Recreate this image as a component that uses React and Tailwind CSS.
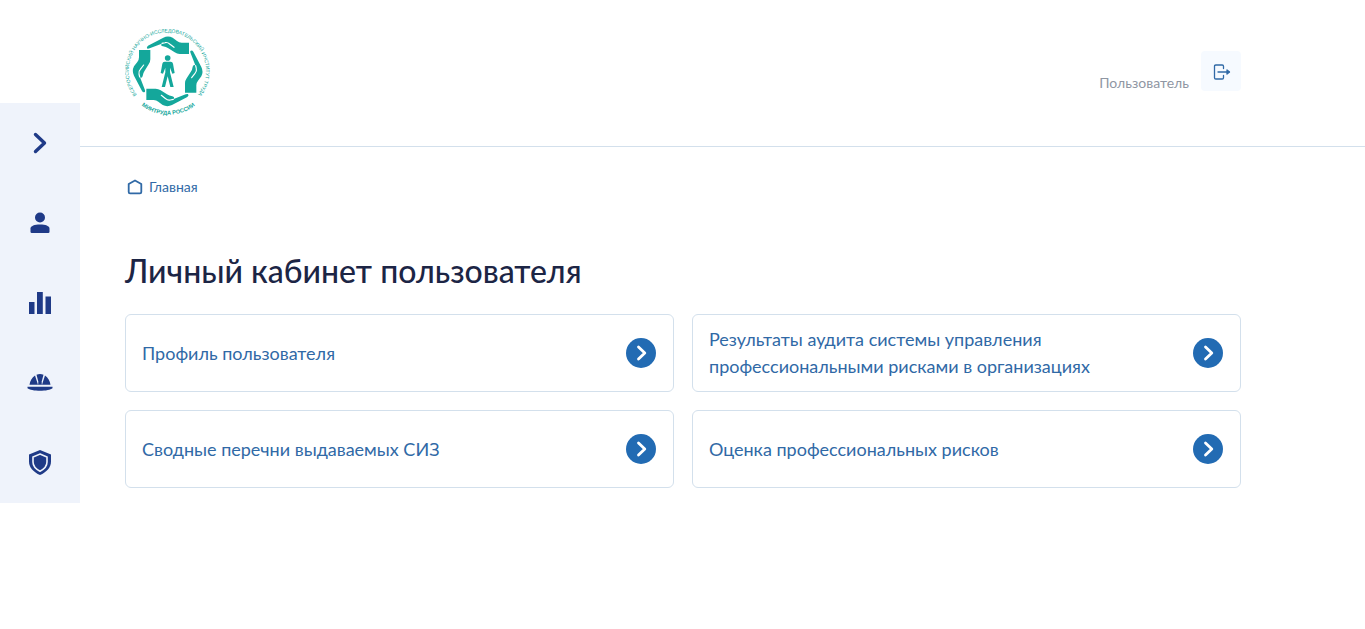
import React from 'react';

const menu = [
  { id: 'open', label: 'Развернуть меню', Icon: ChevronIcon },
  { id: 'profile', label: 'Профиль', Icon: UserIcon },
  { id: 'stats', label: 'Статистика', Icon: ChartIcon },
  { id: 'siz', label: 'СИЗ', Icon: HelmetIcon },
  { id: 'risks', label: 'Риски', Icon: ShieldIcon },
];

const cards = [
  { href: '#profile', title: 'Профиль пользователя' },
  { href: '#audit', title: 'Результаты аудита системы управления профессиональными рисками в организациях' },
  { href: '#siz', title: 'Сводные перечни выдаваемых СИЗ' },
  { href: '#risks', title: 'Оценка профессиональных рисков' },
];

function ChevronIcon() {
  return (
    <svg width="30" height="30" viewBox="0 0 30 30" fill="none" stroke="currentColor" strokeWidth="3.4" strokeLinecap="round" strokeLinejoin="round">
      <path d="M10.5 6.5 19.5 15l-9 8.5" />
    </svg>
  );
}

function UserIcon() {
  return (
    <svg width="30" height="30" viewBox="0 0 30 30" fill="currentColor">
      <circle cx="15" cy="9.5" r="5" />
      <path d="M5.5 20.5c0-2.5 4-4 9.5-4s9.5 1.5 9.5 4v3.300q0 1.200-1.200 1.200H6.700q-1.200 0-1.200-1.200z" />
    </svg>
  );
}

function ChartIcon() {
  return (
    <svg width="30" height="30" viewBox="0 0 30 30" fill="currentColor">
      <path d="M4 14h5.500v12H4zM12 4h5.800v22H12zM20.500 8.500H26V26h-5.500z" />
    </svg>
  );
}

function HelmetIcon() {
  return (
    <svg width="30" height="30" viewBox="0 0 30 30" fill="currentColor">
      <path d="M11.500 6.800Q15 5.200 18.500 6.800L16.300 15h-2.600zM10 7.600l3 9.200H4.500C5 13 7 9.500 10 7.600zM20 7.600l-3 9.200h8.500C25 13 23 9.500 20 7.600z" />
      <path d="M2.500 18.800h25v1.500C24 23.600 6 23.600 2.500 20.300z" />
      <path d="M13.600 14h2.800l.6 2.800h-4z" />
    </svg>
  );
}

function ShieldIcon() {
  return (
    <svg width="30" height="30" viewBox="0 0 30 30">
      <path d="M15 2 26 6.500v7c0 6-4.500 10.800-11 13.500C8.500 24.300 4 19.500 4 13.500v-7z" fill="currentColor" />
      <path d="M15 6 22 9v5c0 4-2.700 7-7 9.200-4.300-2.200-7-5.200-7-9.200V9z" fill="currentColor" stroke="#eff3fb" strokeWidth="1.600" />
    </svg>
  );
}

const hand = 'M97 86Q93 81 99 77L145 53Q159 46 173 53L186 63Q192 68 200 68H222V102H194Q186 102 179 97L160 85Q153 80 144 79 136 77 140 71L104 85Q100 87 97 86Z';
const angles = [0, 90, 180, 270];

function Logo() {
  return (
    <svg width="86" height="90" viewBox="30 21 258 270" fill="#14a79b" role="img" aria-label="ВНИИ труда">
      <defs>
        <path id="ring-top" d="M87 245.500A116 116 0 1 1 227 245.500" />
        <path id="ring-bottom" d="M70 248A130 130 0 0 0 250 248" />
      </defs>
      <text fontSize="15" fontFamily="Liberation Sans, sans-serif" textAnchor="middle">
        <textPath href="#ring-top" startOffset="50%">ВСЕРОССИЙСКИЙ НАУЧНО-ИССЛЕДОВАТЕЛЬСКИЙ ИНСТИТУТ ТРУДА</textPath>
      </text>
      <text fontSize="17" fontWeight="700" fontFamily="Liberation Sans, sans-serif" textAnchor="middle">
        <textPath href="#ring-bottom" startOffset="50%">МИНТРУДА РОССИИ</textPath>
      </text>
      {/* four hands around the figure */}
      {angles.map((angle) => (
        <g key={angle} transform={`rotate(${angle} 158 154)`}>
          <path d={hand} />
          <path d="M141 70 150 68Q158 66 164 72L177 82" fill="none" stroke="#fff" strokeWidth="3.500" strokeLinecap="round" />
        </g>
      ))}
      <circle cx="158" cy="114" r="8.500" />
      <path d="M149 125h18q6 0 7 6l5 28-7 2-7-18v14l11 44h-10l-8-32-8 32h-10l11-44v-14l-7 18-7-2 5-28q1-6 7-6z" />
    </svg>
  );
}

function LogoutIcon() {
  return (
    <svg width="20" height="20" viewBox="0 -1 20 20" fill="none" stroke="currentColor" strokeWidth="1.300" strokeLinecap="round" strokeLinejoin="round">
      <path d="M12.500 6.500V4.300q0-1.300-1.300-1.300H4.800Q3.500 3 3.500 4.300v11.400q0 1.300 1.300 1.300h6.400q1.300 0 1.300-1.300V13.500" />
      <path d="M7 10h11" />
      <path d="m16 8 2.500 2-2.500 2z" fill="currentColor" />
    </svg>
  );
}

function HomeIcon() {
  return (
    <svg width="20" height="20" viewBox="0 0 20 20" fill="none" stroke="currentColor" strokeWidth="1.800" strokeLinejoin="round">
      <path d="M3.700 7 10 3.500 16.300 7v8q0 1.300-1.300 1.300H5q-1.300 0-1.300-1.300z" />
    </svg>
  );
}

function Card({ href, title }) {
  return (
    <a
      href={href}
      className="flex min-h-[78px] items-center justify-between gap-8 rounded-md border border-[#d3e0ec] px-4 py-2 hover:border-[#226bb3]"
    >
      <span className="max-w-[420px] text-lg leading-[27px] text-[#3069a6]">{title}</span>
      <span className="flex h-8 w-8 shrink-0 items-center justify-center">
        <svg width="30" height="30" viewBox="0 0 30 30">
          <circle cx="15" cy="15" r="15" fill="#226bb3" />
          <path d="M12.500 9 18.800 15l-6.300 6" fill="none" stroke="#fff" strokeWidth="2.800" strokeLinecap="round" strokeLinejoin="round" />
        </svg>
      </span>
    </a>
  );
}

export default function App() {
  return (
    <div className="flex min-h-screen items-start bg-white font-['Lato',sans-serif]">
      {/* Sidebar */}
      <nav className="mt-[103px] flex w-20 shrink-0 flex-col bg-[#eff3fb] text-[#1f3a87]">
        {menu.map(({ id, label, Icon }) => (
          <button key={id} type="button" aria-label={label} className="flex h-20 items-center justify-center">
            <Icon />
          </button>
        ))}
      </nav>

      <div className="flex-1">
        {/* Header */}
        <header className="flex items-start justify-between border-b border-[#d3e0ec] pt-[27px] pr-[124px] pb-[29px] pl-[45px]">
          <a href="#home">
            <Logo />
          </a>
          <div className="mt-6 flex items-start gap-3">
            <span className="mt-[22px] text-sm text-[#8f96a3]">Пользователь</span>
            <button
              type="button"
              aria-label="Выйти"
              className="flex h-10 w-10 items-center justify-center rounded-sm bg-[#f6faff] text-[#3069a6]"
            >
              <LogoutIcon />
            </button>
          </div>
        </header>

        {/* Content */}
        <main className="pt-[30px] pr-[124px] pb-10 pl-[45px]">
          <a href="#home" className="flex items-center gap-1 text-sm text-[#3069a6]">
            <HomeIcon />
            Главная
          </a>
          <h1 className="mt-[50px] text-[32px] leading-[48px] font-medium text-[#1c2545]">Личный кабинет пользователя</h1>
          <div className="mt-[19px] grid grid-cols-2 gap-[18px]">
            {cards.map((card) => (
              <Card key={card.href} {...card} />
            ))}
          </div>
        </main>
      </div>
    </div>
  );
}
